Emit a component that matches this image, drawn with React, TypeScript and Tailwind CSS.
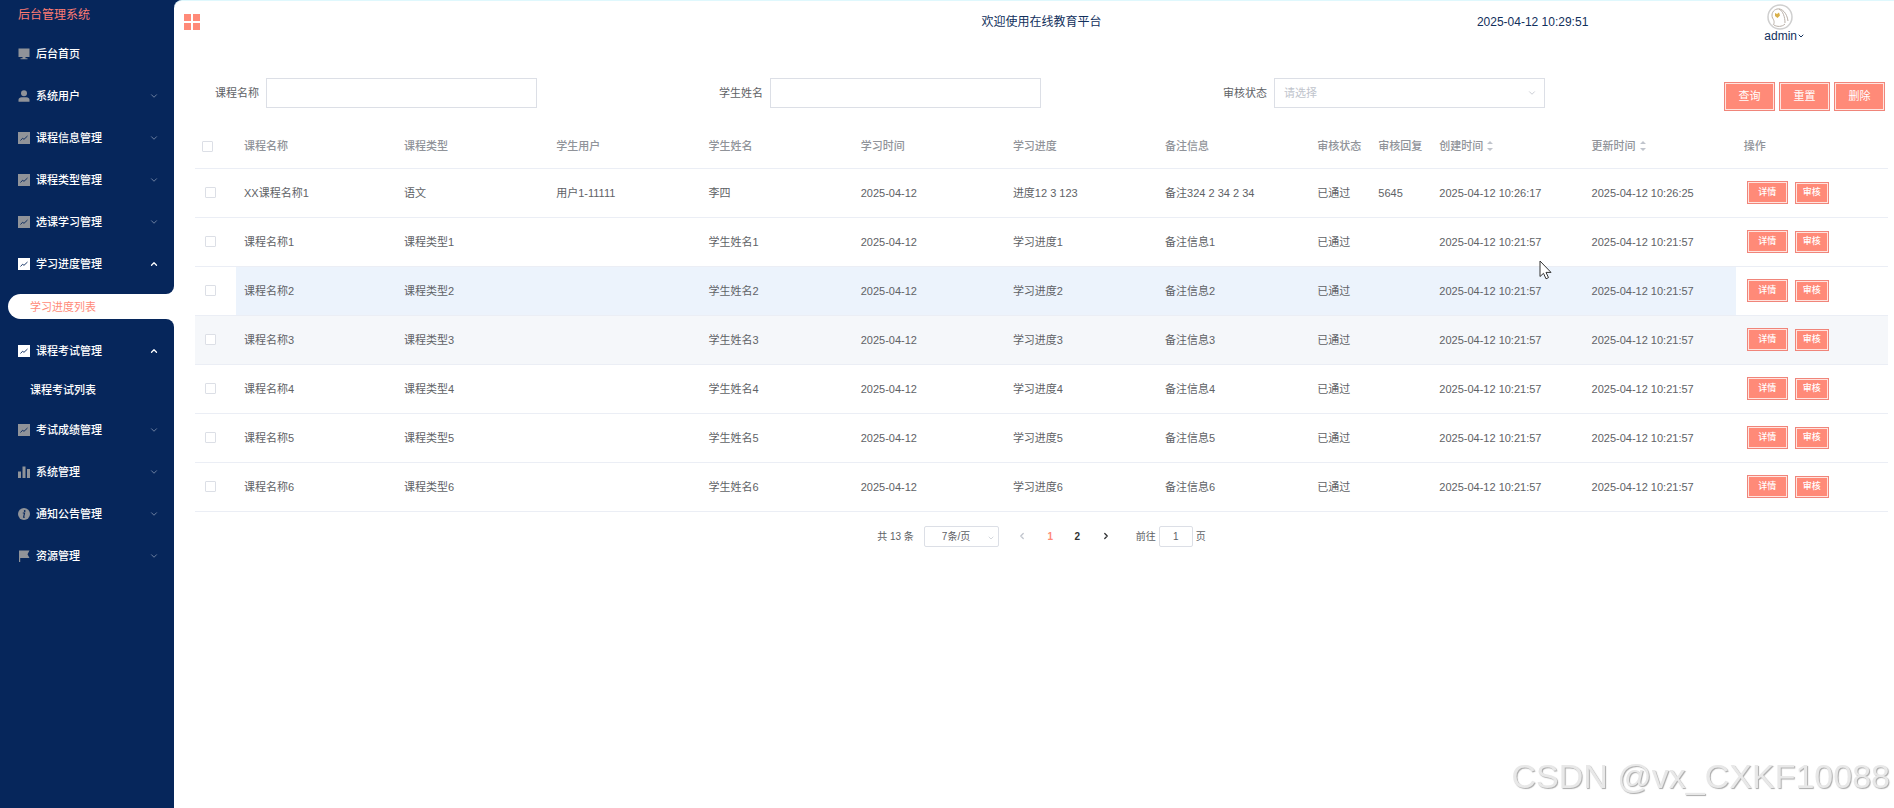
import { ChevronDown, ChevronLeft, ChevronRight, ChevronUp } from "lucide-react";

type IconName = "monitor" | "user" | "trend" | "bars" | "info" | "flag";

interface MenuItem {
  label: string;
  icon: IconName;
  children?: { label: string; active?: boolean }[];
  open?: boolean;
}

const menu: MenuItem[] = [
  { label: "后台首页", icon: "monitor" },
  { label: "系统用户", icon: "user", children: [] },
  { label: "课程信息管理", icon: "trend", children: [] },
  { label: "课程类型管理", icon: "trend", children: [] },
  { label: "选课学习管理", icon: "trend", children: [] },
  {
    label: "学习进度管理",
    icon: "trend",
    open: true,
    children: [{ label: "学习进度列表", active: true }],
  },
  {
    label: "课程考试管理",
    icon: "trend",
    open: true,
    children: [{ label: "课程考试列表" }],
  },
  { label: "考试成绩管理", icon: "trend", children: [] },
  { label: "系统管理", icon: "bars", children: [] },
  { label: "通知公告管理", icon: "info", children: [] },
  { label: "资源管理", icon: "flag", children: [] },
];

const columns = [
  { title: "课程名称", width: "w-[160px]" },
  { title: "课程类型", width: "" },
  { title: "学生用户", width: "" },
  { title: "学生姓名", width: "" },
  { title: "学习时间", width: "" },
  { title: "学习进度", width: "" },
  { title: "备注信息", width: "" },
  { title: "审核状态", width: "w-[61px]" },
  { title: "审核回复", width: "w-[61px]" },
  { title: "创建时间", width: "", sortable: true },
  { title: "更新时间", width: "", sortable: true },
  { title: "操作", width: "" },
];

const created = "2025-04-12 10:21:57";

const rows = [
  [
    "XX课程名称1",
    "语文",
    "用户1-11111",
    "李四",
    "2025-04-12",
    "进度12 3 123",
    "备注324 2 34 2 34",
    "已通过",
    "5645",
    "2025-04-12 10:26:17",
    "2025-04-12 10:26:25",
  ],
  ...[1, 2, 3, 4, 5, 6].map((n) => [
    `课程名称${n}`,
    `课程类型${n}`,
    "",
    `学生姓名${n}`,
    "2025-04-12",
    `学习进度${n}`,
    `备注信息${n}`,
    "已通过",
    "",
    created,
    created,
  ]),
];

const HOVERED = 2;
const STRIPED = 3;

const MenuIcon = ({ name, bright }: { name: IconName; bright?: boolean }) => (
  <svg
    viewBox="0 0 12 12"
    className={`w-3 h-3 shrink-0 ${bright ? "text-white" : "text-[#909399]"}`}
    fill="currentColor"
    aria-hidden="true"
  >
    {name === "monitor" && <path d="M0.5 0.5h11V9h-4v1.2h2v1h-7v-1h2V9h-4z" />}
    {name === "user" && (
      <>
        <circle cx="6" cy="3.2" r="3" />
        <path d="M0.5 11.7V9.8C0.5 8 2 7.2 3.5 7.2h5c1.500 0 3 0.800 3 2.600v1.900z" />
      </>
    )}
    {name === "trend" && (
      <>
        <rect width="12" height="12" />
        <path d="M2.5 8.5l2-2.2 1.500 1L9.500 4" fill="none" stroke="#06265b" strokeWidth="0.9" />
      </>
    )}
    {name === "bars" && <path d="M0 5.500h3v6.500H0zM4.500 0.500h3V12h-3zM9 3h3v9H9z" />}
    {name === "info" && (
      <>
        <circle cx="6" cy="6" r="6" />
        <circle cx="6.700" cy="3" r="0.9" fill="#06265b" />
        <path d="M4.800 5h1.800l-1 4.200h1.200" fill="none" stroke="#06265b" strokeWidth="1.1" />
      </>
    )}
    {name === "flag" && <path d="M1 0.5h10.500L9.500 4.200l2 3.800H2.200v4H1z" />}
  </svg>
);

// White pill that runs into the content panel through two rounded corners
const ActiveSubItem = ({ label }: { label: string }) => (
  <li>
    <div className="bg-white">
      <div className="h-[9px] rounded-br-lg bg-[#06265b]" />
    </div>
    <div className="pl-2">
      <a
        href="#"
        className="flex h-[25px] items-center rounded-l-full bg-white pt-0.5 pl-[22px] text-[#ff8a78]"
      >
        {label}
      </a>
    </div>
    <div className="bg-white">
      <div className="h-[11px] rounded-tr-lg bg-[#06265b]" />
    </div>
  </li>
);

const Sidebar = () => (
  <aside className="w-[174px] shrink-0 bg-[#06265b] text-[11px] text-white">
    <h1 className="flex h-[33px] items-center pb-1 pl-[18px] text-xs text-[#ff7d73]">
      后台管理系统
    </h1>
    <nav>
      <ul>
        {menu.map((item) => (
          <li key={item.label}>
            <button type="button" className="flex h-[42px] w-full items-center pr-[15px] pl-[18px]">
              <MenuIcon name={item.icon} bright={item.open} />
              <span className="ml-[6px] flex-1 text-left font-medium">{item.label}</span>
              {item.children &&
                (item.open ? (
                  <ChevronUp className="h-2.5 w-2.5" strokeWidth={3} />
                ) : (
                  <ChevronDown className="h-2.5 w-2.5 text-[#7f90ad]" />
                ))}
            </button>
            {item.open && (
              <ul>
                {item.children?.map((child) =>
                  child.active ? (
                    <ActiveSubItem key={child.label} label={child.label} />
                  ) : (
                    <li key={child.label}>
                      <a href="#" className="flex h-[37px] items-center pl-[30px] font-medium">
                        {child.label}
                      </a>
                    </li>
                  ),
                )}
              </ul>
            )}
          </li>
        ))}
      </ul>
    </nav>
  </aside>
);

const Avatar = () => (
  <svg viewBox="0 0 26 26" className="h-[26px] w-[26px]" aria-hidden="true">
    <circle cx="13" cy="13" r="12" fill="#fff" stroke="#cfcfcf" strokeWidth="1.5" />
    <path
      d="M6 21c2-2 1-5-0.500-7C4 10 6 6 10 5c5-1 10 4 11 12M12 5c4 2 6 8 6 14M7 21c3 2 8 2 11-1"
      fill="none"
      stroke="#b9b0a8"
    />
    <path d="M8 9l2 1 2-1.500 1 3-2.500 2.500L8 12z" fill="#d9b04a" />
  </svg>
);

const TopBar = () => (
  <header className="grid h-[53px] grid-cols-[1fr_auto_1fr] items-start pr-[6px] pl-[21px] text-xs text-[#12305c]">
    <button type="button" aria-label="折叠菜单" className="mt-[13px] -ml-[11px] w-4">
      <svg viewBox="0 0 16 16" className="h-4 w-4" fill="#ff8a78">
        <path d="M0 0h7v7H0zM9 0h7v7H9zM0 9h7v7H0zM9 9h7v7H9z" />
      </svg>
    </button>
    <p className="mt-[13px]">欢迎使用在线教育平台</p>
    <div className="flex items-start justify-end pr-[83px]">
      <time className="mt-[13px] mr-[176px]">2025-04-12 10:29:51</time>
      <button type="button" className="mt-[3px] flex flex-col items-start">
        <span className="pl-[3px]">
          <Avatar />
        </span>
        <span className="flex items-center leading-3">
          admin
          <ChevronDown className="h-2 w-2" strokeWidth={3} />
        </span>
      </button>
    </div>
  </header>
);

const actionButton =
  "border border-[#f0857a] bg-[#ff8a78] text-white shadow-[inset_0_0_0_1px_#ffe4df]";

const SearchForm = () => (
  <form className="flex text-[11px] text-[#606266]">
    <div className="grid flex-1 grid-cols-3 items-start">
      <div className="flex items-center pl-5">
        <label htmlFor="course" className="w-[51px] shrink-0">
          课程名称
        </label>
        <input id="course" className="h-[30px] w-[56%] border border-[#dcdfe6] px-2" />
      </div>
      <div className="flex items-center pl-5">
        <label htmlFor="student" className="w-[51px] shrink-0">
          学生姓名
        </label>
        <input id="student" className="h-[30px] w-[56%] border border-[#dcdfe6] px-2" />
      </div>
      <div className="flex items-center pl-5">
        <label htmlFor="status" className="w-[51px] shrink-0">
          审核状态
        </label>
        <div className="relative w-[56%]">
          <select
            id="status"
            className="h-[30px] w-full appearance-none border border-[#dcdfe6] px-[9px] text-[#c0c4cc]"
          >
            <option>请选择</option>
          </select>
          <ChevronDown className="pointer-events-none absolute top-2.5 right-2 h-2.5 w-2.5 text-[#c0c4cc]" />
        </div>
      </div>
    </div>
    <div className="flex w-[181px] items-end justify-end gap-1 pt-1 pr-[3px]">
      {["查询", "重置", "删除"].map((label) => (
        <button key={label} type="button" className={`h-[29px] w-[51px] ${actionButton}`}>
          {label}
        </button>
      ))}
    </div>
  </form>
);

const SortArrows = () => (
  <svg viewBox="0 0 6 12" className="ml-1 h-3 w-1.5" fill="#c0c4cc" aria-hidden="true">
    <path d="M3 1l3 3H0zM3 11l3-3H0z" />
  </svg>
);

const checkbox =
  "block h-[11px] w-[11px] appearance-none rounded-[1px] border border-[#dcdfe6] bg-white";

const cellColor = (index: number) => {
  if (index === HOVERED) return "bg-[#ecf3fc]";
  if (index === STRIPED) return "bg-[#f5f7fa]";
  return "";
};

const edgeColor = (index: number) => (index === STRIPED ? "bg-[#f5f7fa]" : "");

const ProgressTable = () => (
  <table className="w-full table-fixed text-left text-[11px] text-[#606266]">
    <thead className="text-[#909399]">
      <tr className="h-[45px] border-b border-[#ebeef5]">
        <th className="w-[41px] pt-0.5 pl-[7px]">
          <input type="checkbox" aria-label="全选" className={checkbox} />
        </th>
        {columns.map((col) => (
          <th key={col.title} className={`px-2 pt-0.5 font-medium whitespace-nowrap ${col.width}`}>
            {col.sortable ? (
              <button type="button" className="flex items-center">
                {col.title}
                <SortArrows />
              </button>
            ) : (
              col.title
            )}
          </th>
        ))}
      </tr>
    </thead>
    <tbody>
      {rows.map((row, i) => (
        <tr key={row[0]} className="h-[49px] border-b border-[#ebeef5]">
          <td className={`pl-[10px] ${edgeColor(i)}`}>
            <input type="checkbox" aria-label={`选择${row[0]}`} className={checkbox} />
          </td>
          {row.map((text, j) => (
            <td key={j} className={`px-2 pt-0.5 whitespace-nowrap ${cellColor(i)}`}>
              {text}
            </td>
          ))}
          <td className={`pl-[11px] ${edgeColor(i)}`}>
            <div className="flex items-center gap-[7px] text-[9px] font-medium">
              <button type="button" className={`h-[23px] w-[41px] ${actionButton}`}>
                详情
              </button>
              <button type="button" className={`h-[22px] w-[34px] ${actionButton}`}>
                审核
              </button>
            </div>
          </td>
        </tr>
      ))}
    </tbody>
  </table>
);

const Pagination = () => (
  <div className="mt-[14px] flex h-[21px] items-center justify-center text-[10px] text-[#606266]">
    <span>共 13 条</span>
    <div className="relative ml-[10px]">
      <select
        aria-label="每页条数"
        className="h-[21px] w-[75px] appearance-none rounded-[2px] border border-[#dcdfe6] pl-[17px]"
      >
        <option>7条/页</option>
      </select>
      <ChevronDown className="pointer-events-none absolute top-2 right-1 h-2 w-2 text-[#c0c4cc]" />
    </div>
    <button type="button" aria-label="上一页" className="ml-[18px] text-[#c0c4cc]">
      <ChevronLeft className="h-2.5 w-2.5" strokeWidth={3} />
    </button>
    <button type="button" className="ml-[10px] w-[27px] font-bold text-[#ff8a78]">
      1
    </button>
    <button type="button" className="w-[27px] font-bold text-[#303133]">
      2
    </button>
    <button type="button" aria-label="下一页" className="ml-[10px] text-[#303133]">
      <ChevronRight className="h-2.5 w-2.5" strokeWidth={3} />
    </button>
    <label htmlFor="page" className="ml-[25px]">
      前往
    </label>
    <input
      id="page"
      defaultValue="1"
      className="mx-[3px] h-[21px] w-[34px] rounded-[2px] border border-[#dcdfe6] text-center"
    />
    <span>页</span>
  </div>
);

const App = () => (
  <div className="flex min-h-screen bg-[#06265b] font-['Liberation_Sans','Noto_Sans_CJK_SC',sans-serif]">
    <Sidebar />
    <main className="min-w-0 flex-1 rounded-tl-lg border-t border-[#dff8fd] bg-white">
      <TopBar />
      <div className="pt-6 pr-[6px] pl-[21px]">
        <SearchForm />
        <div className="mt-3">
          <ProgressTable />
        </div>
        <Pagination />
      </div>
    </main>
    <svg
      viewBox="0 0 14 20"
      className="pointer-events-none fixed top-[260px] left-[1539px] h-5 w-3.5"
      aria-hidden="true"
    >
      <path
        d="M1 1v15.5l3.500-3.200 2.500 5.500 2.500-1.200-2.500-5.200h5z"
        fill="#fff"
        stroke="#333"
      />
    </svg>
    <p className="pointer-events-none fixed right-1 bottom-3 text-[34px] leading-10 text-[#e8e8e8] [text-shadow:1px_1px_1px_#aaa]">
      CSDN @vx_CXKF10088
    </p>
  </div>
);

export default App;
